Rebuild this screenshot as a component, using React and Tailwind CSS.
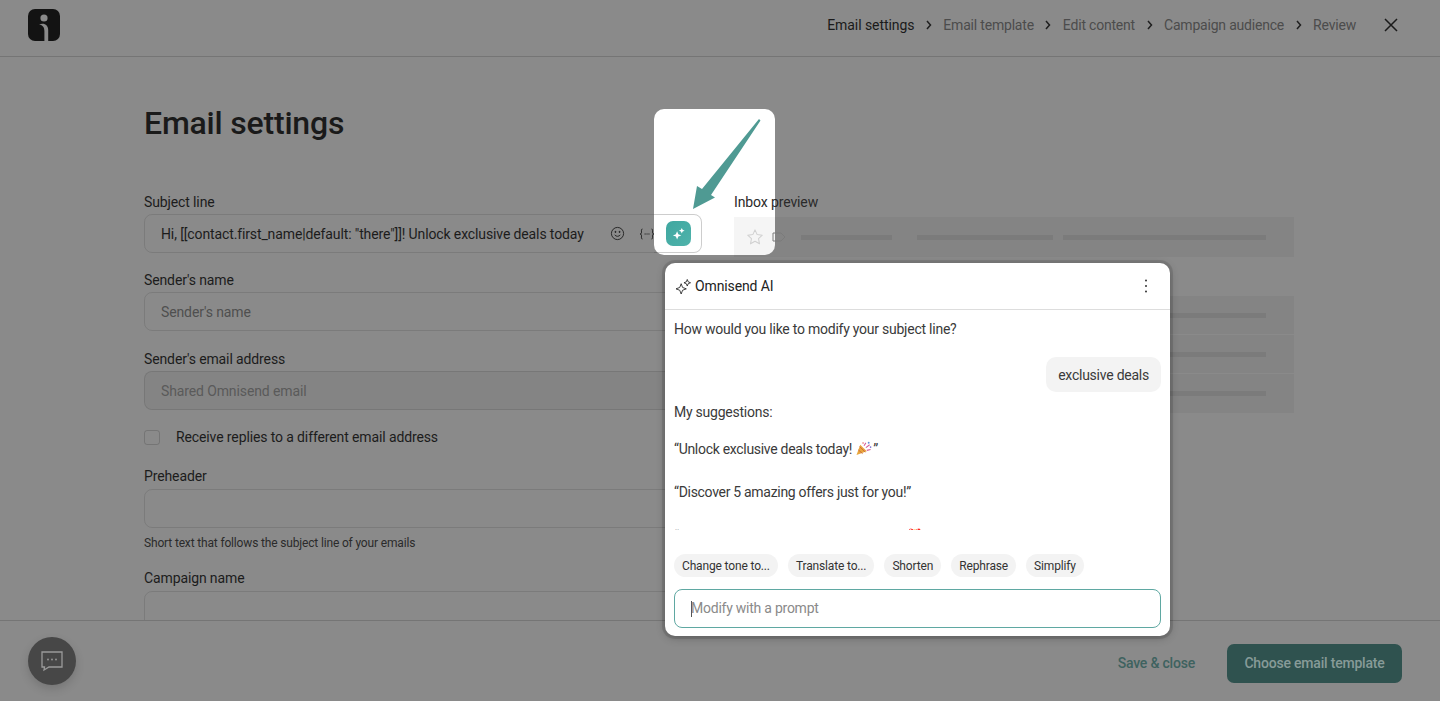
import React from "react";

function Sparkles({ className }) {
  return (
    <svg viewBox="0 0 16 16" className={className} fill="none" stroke="currentColor" strokeWidth="0.9" strokeLinejoin="miter">
      <path d="M5.500 5l1.500 4 4 1.500-4 1.500-1.500 4-1.500-4-4-1.500 4-1.500z" />
      <path d="M12 .5l1 2.500 2.500 1-2.500 1-1 2.500-1-2.500-2.500-1 2.500-1z" />
    </svg>
  );
}

function Label({ children }) {
  return <label className="block text-[14px] leading-[20px] text-[#1c1c1c]">{children}</label>;
}

function Field({ className = "", children }) {
  return (
    <div className={`flex h-[39px] items-center rounded-[8px] border border-black/10 pl-4 text-[14px] leading-[20px] ${className}`}>
      {children}
    </div>
  );
}

function Crumb({ active, children }) {
  return <span className={active ? "tracking-[-0.07px] text-[#1a1a1a]" : "tracking-[-0.2px] text-[#4c4c4c]"}>{children}</span>;
}

function Chevron() {
  return (
    <svg viewBox="0 0 8 10" className="mx-[10.500px] h-[10px] w-2 text-[#1f1f1f]" fill="none" stroke="currentColor" strokeWidth="1.500">
      <path d="M2 1l3.500 4L2 9" />
    </svg>
  );
}

function PreviewRow({ className = "", children }) {
  return <div className={`flex items-center bg-black/[0.04] ${className}`}>{children}</div>;
}

function Bar({ className = "" }) {
  return <span className={`block h-[5px] bg-[#7b7b7b] ${className}`} />;
}

function Chip({ children }) {
  return (
    <span className="flex h-[23px] items-center rounded-full bg-[#f3f3f3] px-2 text-[12px] tracking-[-0.15px] text-[#333333]">
      {children}
    </span>
  );
}

function Popper() {
  return (
    <svg viewBox="0 0 18 16" className="inline-block h-[15px] w-[18px] align-[-2px]">
      <path d="M1 15l4-11 7 7z" fill="#e8a63c" />
      <path d="M3 9.500l4.500 4M4.400 6l6 6" stroke="#c9653f" strokeWidth="1" />
      <path d="M9 5l2-3M11 7l4-3M12 10l4-1" stroke="#d45a9a" strokeWidth="1.100" />
      <circle cx="14" cy="1.800" r="1" fill="#5d8fd8" />
      <circle cx="8" cy="2" r=".8" fill="#e65a5a" />
      <circle cx="16" cy="6.500" r=".9" fill="#7a6fd0" />
    </svg>
  );
}

export default function App() {
  return (
    <div className="relative flex h-[701px] w-[1440px] flex-col overflow-hidden bg-[#8a8a8a] font-['Roboto',sans-serif] tracking-[-0.12px]">
      {/* spotlight sits behind the dimmed page */}
      <div className="absolute left-[654px] top-[109px] h-[146px] w-[121px] rounded-[10px] bg-white" />

      <header className="relative flex h-[57px] shrink-0 items-center justify-between border-b border-black/15 pl-[28px] pr-[42px]">
        <div className="relative mb-[7px] h-[32px] w-[32px] rounded-[7px] bg-[#131313]">
          <svg viewBox="0 0 32 32" className="h-8 w-8">
            <circle cx="16" cy="9" r="3.600" fill="#8a8a8a" />
            <path d="M11 15.500c4 .6 5.400 3 5.400 6.500v10h3.800V21c0-4.500-3.500-7.500-9.200-5.500z" fill="#8a8a8a" />
          </svg>
        </div>
        <nav className="mb-[7px] flex items-center text-[14px] leading-[20px]">
          <Crumb active>Email settings</Crumb>
          <Chevron />
          <Crumb>Email template</Crumb>
          <Chevron />
          <Crumb>Edit content</Crumb>
          <Chevron />
          <Crumb>Campaign audience</Crumb>
          <Chevron />
          <Crumb>Review</Crumb>
          <svg viewBox="0 0 14 14" className="ml-[28px] h-[14px] w-[14px] text-[#1a1a1a]" fill="none" stroke="currentColor" strokeWidth="1.500">
            <path d="M1 1l12 12M13 1L1 13" />
          </svg>
        </nav>
      </header>

      <main className="relative flex min-h-0 flex-1 gap-[32px] overflow-hidden pl-[144px]">
        <section className="w-[558px] shrink-0 pt-[47px]">
          <h1 className="mb-[50px] text-[32px] font-medium leading-[38px] tracking-[-0.2px] text-[#1a1a1a]">Email settings</h1>

          <Label>Subject line</Label>
          <Field className="mt-[2px] mb-[17px] text-[#1c1c1c]">
            <span className="w-[423px] whitespace-nowrap">Hi, [[contact.first_name|default: "there"]]! Unlock exclusive deals today</span>
            <svg viewBox="0 0 16 16" className="ml-[26px] h-[15px] w-[15px] text-[#222222]" fill="none" stroke="currentColor" strokeWidth="1">
              <circle cx="8" cy="8" r="6.500" />
              <path d="M5 9.500c1.600 2 4.400 2 6 0" />
              <circle cx="5.800" cy="6.300" r=".6" fill="currentColor" />
              <circle cx="10.200" cy="6.300" r=".6" fill="currentColor" />
            </svg>
            <svg viewBox="0 0 16 12" className="ml-[14px] h-[12px] w-[16px] text-[#222222]" fill="none" stroke="currentColor" strokeWidth="0.9">
              <path d="M3.500 1C2 1 2.500 2.500 2.500 4S2.500 5.500 1 6c1.500.5 1.500 .5 1.500 2s-.5 3 1 3" />
              <path d="M12.500 1c1.500 0 1 1.500 1 3s0 1.500 1.500 2c-1.500.5-1.500 .5-1.500 2s.5 3-1 3" />
              <path d="M5.500 6h1.300M7.400 6h1.300M9.300 6h1.300" />
            </svg>
            <span className="ml-[11px] flex h-[25px] w-[25px] items-center justify-center rounded-[7px] bg-gradient-to-br from-[#3fa7a0] to-[#4fb3ab]">
              <svg viewBox="0 0 16 16" className="h-[15px] w-[15px]" fill="white">
                <path d="M6.500 5.500l1.300 3.200 3.200 1.300-3.200 1.300-1.300 3.200-1.300-3.200L2 10l3.200-1.300z" />
                <path d="M11.500 2l.9 2.100 2.100.9-2.100.9-.9 2.100-.9-2.100L8.500 5l2.100-.9z" />
              </svg>
            </span>
          </Field>

          <Label>Sender's name</Label>
          <Field className="mt-[2px] mb-[18px] text-[#4f4f4f]">Sender's name</Field>

          <Label>Sender's email address</Label>
          <Field className="mt-[2px] mb-[19px] bg-black/[0.04] text-[#5a5a5a]">Shared Omnisend email</Field>

          <div className="mb-[21px] flex items-center gap-4 text-[14px] leading-[16px] text-[#1c1c1c]">
            <span className="h-[15px] w-[16px] rounded-[3px] border border-black/15" />
            Receive replies to a different email address
          </div>

          <Label>Preheader</Label>
          <Field className="mt-[3px] mb-[7px]" />
          <p className="mb-[17px] text-[12px] leading-[16px] tracking-[-0.16px] text-[#2b2b2b]">Short text that follows the subject line of your emails</p>

          <Label>Campaign name</Label>
          <Field className="mt-[3px]" />
        </section>

        <section className="min-w-0 w-[560px] shrink-0 pt-[135px]">
          <p className="text-[14px] leading-[20px] text-[#2a2a2a]">Inbox preview</p>
          <PreviewRow className="mt-[5px] h-[40px] pl-[12px]">
            <svg viewBox="0 0 24 24" className="h-[18px] w-[18px] text-black/15" fill="none" stroke="currentColor" strokeWidth="1.400" strokeLinejoin="round">
              <path d="M12 2.500l2.900 6.300 6.800.8-5 4.700 1.300 6.800-6-3.400-6 3.400 1.300-6.800-5-4.700 6.800-.8z" />
            </svg>
            <svg viewBox="0 0 14 10" className="ml-[8px] h-[10px] w-[14px] text-[#7b7b7b]" fill="none" stroke="currentColor" strokeWidth="1">
              <path d="M1 1h8l4 4-4 4H1z" />
            </svg>
            <Bar className="ml-[15px] w-[91px]" />
            <Bar className="ml-[25px] w-[136px]" />
            <Bar className="ml-[10px] w-[203px]" />
          </PreviewRow>
          <div className="mt-[39px] flex flex-col gap-px">
            <PreviewRow className="h-[38px] justify-end pr-[28px]"><Bar className="w-[400px]" /></PreviewRow>
            <PreviewRow className="h-[38px] justify-end pr-[28px]"><Bar className="w-[400px]" /></PreviewRow>
            <PreviewRow className="h-[39px] justify-end pr-[28px]"><Bar className="w-[400px]" /></PreviewRow>
          </div>
        </section>
      </main>

      <footer className="relative flex h-[81px] shrink-0 items-center justify-between border-t border-black/15 pl-[28px] pr-[38px]">
        <button className="flex h-[48px] w-[48px] items-center justify-center rounded-full bg-[#474747] shadow-[0_4px_10px_rgba(0,0,0,0.15)]">
          <svg viewBox="0 0 24 24" className="h-[24px] w-[24px] text-[#9a9a9a]" fill="none" stroke="currentColor" strokeWidth="1.300">
            <path d="M2 3h20v15H9l-5 3 .5-3H2z" />
            <circle cx="8" cy="10.500" r=".9" fill="currentColor" stroke="none" />
            <circle cx="12" cy="10.500" r=".9" fill="currentColor" stroke="none" />
            <circle cx="16" cy="10.500" r=".9" fill="currentColor" stroke="none" />
          </svg>
        </button>
        <div className="mt-[4px] flex items-center gap-[32px] text-[14px] font-medium tracking-[-0.2px]">
          <span className="text-[#3e625f]">Save &amp; close</span>
          <span className="flex h-[39px] w-[175px] items-center justify-center rounded-[7px] bg-[#2f524f] text-[#879b98]">Choose email template</span>
        </div>
      </footer>

      {/* pointer arrow */}
      <svg viewBox="0 0 120 146" className="pointer-events-none absolute left-[654px] top-[109px] h-[146px] w-[120px]">
        <path d="M105 10L106.500 11.500 57 86 61 88.500 39 100 43 77 48 80z" fill="#4f9a93" />
      </svg>
      <span className="pointer-events-none absolute left-[654px] top-[214px] h-[39px] w-[48px] rounded-r-[8px] border border-l-0 border-black/10" />

      {/* Omnisend AI popup */}
      <div className="absolute left-[665px] top-[263px] flex h-[373px] w-[505px] flex-col rounded-[10px] bg-white shadow-[0_0_0_3px_rgba(0,0,0,0.1),0_2px_8px_rgba(0,0,0,0.25)]">
        <div className="flex h-[47px] shrink-0 items-center justify-between border-b border-[#dddddd] pl-[11px] pr-[22px]">
          <div className="flex items-center gap-[4px] text-[14px] text-[#222222]">
            <Sparkles className="h-[15px] w-[15px]" />
            Omnisend AI
          </div>
          <svg viewBox="0 0 4 14" className="h-[14px] w-[4px] text-[#333333]" fill="currentColor">
            <circle cx="2" cy="1.500" r="1" /><circle cx="2" cy="7" r="1" /><circle cx="2" cy="12.500" r="1" />
          </svg>
        </div>
        <div className="h-[220px] shrink-0 overflow-hidden px-[9px] pt-[9px] text-[14px] leading-[20px] tracking-[-0.24px] text-[#3a3a3a]">
          <p>How would you like to modify your subject line?</p>
          <div className="mt-[18px] flex justify-end">
            <span className="flex h-[35px] items-center rounded-[10px] bg-[#f3f3f3] px-3">exclusive deals</span>
          </div>
          <p className="mt-[10px]">My suggestions:</p>
          <p className="mt-[17px] tracking-[-0.3px]">“Unlock exclusive deals today! <Popper />”</p>
          <p className="mt-[23px] tracking-[-0.3px]">“Discover 5 amazing offers just for you!”</p>
          <p className="mt-[24px]">“Explore exclusive deals made for you! 🎁”</p>
        </div>
        <div className="mt-[24px] flex gap-[10px] px-[9px]">
          <Chip>Change tone to...</Chip>
          <Chip>Translate to...</Chip>
          <Chip>Shorten</Chip>
          <Chip>Rephrase</Chip>
          <Chip>Simplify</Chip>
        </div>
        <div className="mx-[9px] mt-[12px] flex h-[39px] items-center rounded-[8px] border border-[#5fa8a2] pl-4 text-[14px] tracking-[-0.24px] text-[#8a8a8a]">
          <span className="-mr-px h-[16px] w-px bg-[#555555]" />
          Modify with a prompt
        </div>
      </div>
    </div>
  );
}
